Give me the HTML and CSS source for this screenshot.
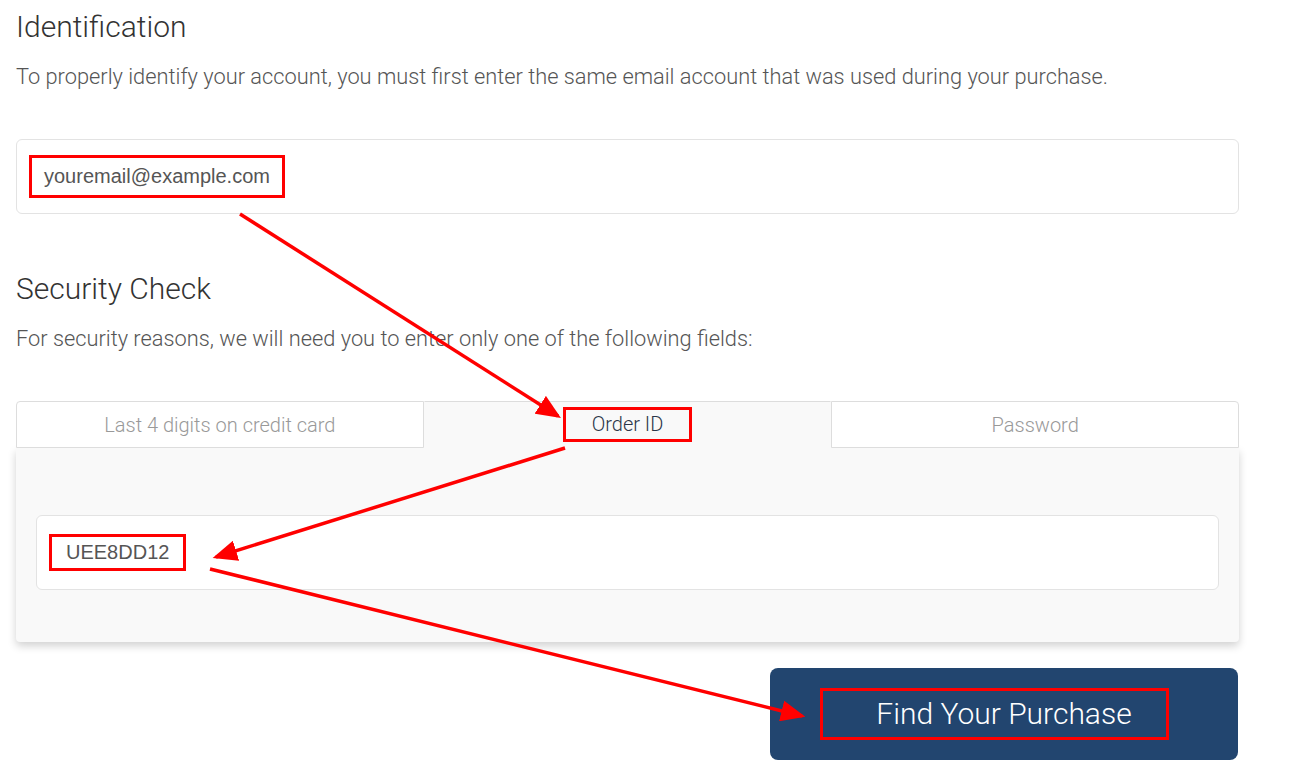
FILE: index.html
```html
<!DOCTYPE html>
<html lang="en">
<head>
  <meta charset="UTF-8">
  <title>Find Your Purchase</title>
  <link rel="stylesheet" href="styles.css">
</head>
<body>

<div id="page">
  <h1 class="title">Identification</h1>
  <p class="lead">To properly identify your account, you must first enter the same email account that was used during your purchase.</p>

  <div class="field">
    <span class="mark">youremail@example.com</span>
  </div>

  <h2 class="title title-second">Security Check</h2>
  <p class="lead lead-second">For security reasons, we will need you to enter only one of the following fields:</p>

  <div class="tabs">
    <div class="tab tab-first">Last 4 digits on credit card</div>
    <div class="tab active"><span class="mark mark-tab">Order ID</span></div>
    <div class="tab tab-last">Password</div>
  </div>

  <div class="panel">
    <div class="field field-inner">
      <span class="mark mark-code">UEE8DD12</span>
    </div>
  </div>

  <div class="actions">
    <button class="submit"><span class="mark mark-button">Find Your Purchase</span></button>
  </div>

  <!-- annotation arrows -->
  <svg class="arrows" width="1301" height="770" viewBox="0 0 1301 770">
    <defs>
      <marker id="head" markerWidth="7" markerHeight="6" refX="6" refY="3" orient="auto" markerUnits="strokeWidth">
        <path d="M0,0 L7,3 L0,6 z" fill="#ff0000"/>
      </marker>
    </defs>
    <line x1="240" y1="205" x2="558" y2="407" stroke="#ff0000" stroke-width="3.5" marker-end="url(#head)"/>
    <line x1="565" y1="439" x2="216" y2="548" stroke="#ff0000" stroke-width="3.5" marker-end="url(#head)"/>
    <line x1="210" y1="560" x2="802" y2="707" stroke="#ff0000" stroke-width="3.5" marker-end="url(#head)"/>
  </svg>
</div>

</body>
</html>
```

FILE: styles.css
```css
html, body {
  margin: 0;
  padding: 0;
  background: #fff;
  font-family: 'Roboto', sans-serif;
  color: #555;
}

#page {
  position: relative;
  width: 1223px;
  padding: 0 16px;
}

.title {
  margin: 9px 0 0;
  font-size: 30px;
  line-height: 36px;
  font-weight: 300;
  color: #333;
}

.title-second {
  margin-top: 57px;
}

.lead {
  margin: 18px 0 0;
  font-size: 21.8px;
  line-height: 28px;
  font-weight: 300;
  color: #555;
}

.lead-second {
  margin-top: 18px;
}

.field {
  box-sizing: border-box;
  height: 75px;
  margin-top: 48px;
  padding: 0 12px;
  display: flex;
  align-items: center;
  background: #fff;
  border: 1px solid #e3e3e3;
  border-radius: 6px;
  font-family: 'Liberation Sans', Arial, sans-serif;
  font-size: 20px;
  color: #555;
}

.mark {
  border: 3px solid #ff0000;
  padding: 7px 12px;
  line-height: 23px;
}

.tabs {
  display: flex;
  margin-top: 48px;
}

.tab {
  box-sizing: border-box;
  flex: 1;
  height: 47px;
  display: flex;
  align-items: center;
  justify-content: center;
  background: #fff;
  border: 1px solid #dddddd;
  font-size: 20px;
  font-weight: 300;
  color: #999;
}

.tab-first {
  border-radius: 4px 0 0 0;
}

.tab-last {
  border-radius: 0 4px 0 0;
}

.tab.active {
  background: #f9f9f9;
  border-color: #f9f9f9;
  border-top-color: #dddddd;
  color: #2b3648;
}

.mark-tab {
  padding: 3px 26px;
  color: #2b3648;
}

.panel {
  box-sizing: border-box;
  height: 194px;
  padding: 67px 20px 0;
  background: #f9f9f9;
  border-radius: 0 0 4px 4px;
  box-shadow: 0 4px 8px rgba(0, 0, 0, 0.18);
}

.field-inner {
  margin-top: 0;
  height: 75px;
}

.mark-code {
  padding: 4px 14px;
}

.actions {
  display: flex;
  justify-content: flex-end;
  margin-top: 26px;
}

.submit {
  width: 468px;
  height: 92px;
  margin-right: 1px;
  border: none;
  border-radius: 8px;
  background: #22456f;
  color: #fff;
  font-family: 'Roboto', sans-serif;
  font-size: 30px;
  font-weight: 300;
  display: flex;
  align-items: center;
  justify-content: center;
}

.mark-button {
  margin-right: 19px;
  padding: 10px 34px 10px 53px;
  line-height: 26px;
}

.arrows {
  position: absolute;
  top: 0;
  left: 0;
  pointer-events: none;
}
```
